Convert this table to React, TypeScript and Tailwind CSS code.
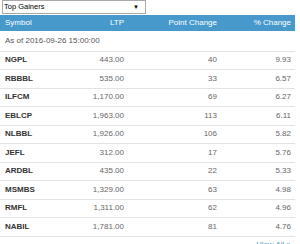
import React from "react";

type Row = { symbol: string; ltp: string; change: string; pct: string };

const rows: Row[] = [
  { symbol: "NGPL", ltp: "443.00", change: "40", pct: "9.93" },
  { symbol: "RBBBL", ltp: "535.00", change: "33", pct: "6.57" },
  { symbol: "ILFCM", ltp: "1,170.00", change: "69", pct: "6.27" },
  { symbol: "EBLCP", ltp: "1,963.00", change: "113", pct: "6.11" },
  { symbol: "NLBBL", ltp: "1,926.00", change: "106", pct: "5.82" },
  { symbol: "JEFL", ltp: "312.00", change: "17", pct: "5.76" },
  { symbol: "ARDBL", ltp: "435.00", change: "22", pct: "5.33" },
  { symbol: "MSMBS", ltp: "1,329.00", change: "63", pct: "4.98" },
  { symbol: "RMFL", ltp: "1,311.00", change: "62", pct: "4.96" },
  { symbol: "NABIL", ltp: "1,781.00", change: "81", pct: "4.76" },
];

export default function App() {
  return (
    <div className="w-[300px] h-[244px] overflow-hidden bg-white font-['Liberation_Sans',Arial,sans-serif] text-[8px]">
      <div className="w-[295px]">
        <div className="ml-[2px] w-[144px] h-[14px] border border-[#a9a9a9] bg-white flex items-center justify-between pl-[1px] pr-[6px] text-[7.5px] text-black">
          <span>Top Gainers</span>
          <span className="text-[6px]">▼</span>
        </div>
        <div className="mt-[1px] h-[16px] bg-[#4799cb] text-white flex items-center">
          <div className="w-[80px] pl-[5px]">Symbol</div>
          <div className="w-[44px] text-right">LTP</div>
          <div className="w-[93px] text-right">Point Change</div>
          <div className="w-[74px] text-right">% Change</div>
        </div>
        <div className="h-[20.5px] flex items-center pl-[5px] text-[#555] border-b border-[#e3e3e3]">
          As of 2016-09-26 15:00:00
        </div>
        {rows.map((r) => (
          <div
            key={r.symbol}
            className="h-[18.5px] flex items-center border-b border-[#e3e3e3] text-[#666]"
          >
            <div className="w-[80px] pl-[5px] font-bold text-[#333]">{r.symbol}</div>
            <div className="w-[44px] text-right">{r.ltp}</div>
            <div className="w-[93px] text-right">{r.change}</div>
            <div className="w-[74px] text-right">{r.pct}</div>
          </div>
        ))}
        <div className="mt-[2px] pr-[4px] text-right text-[#4799cb]">View All »</div>
      </div>
    </div>
  );
}
